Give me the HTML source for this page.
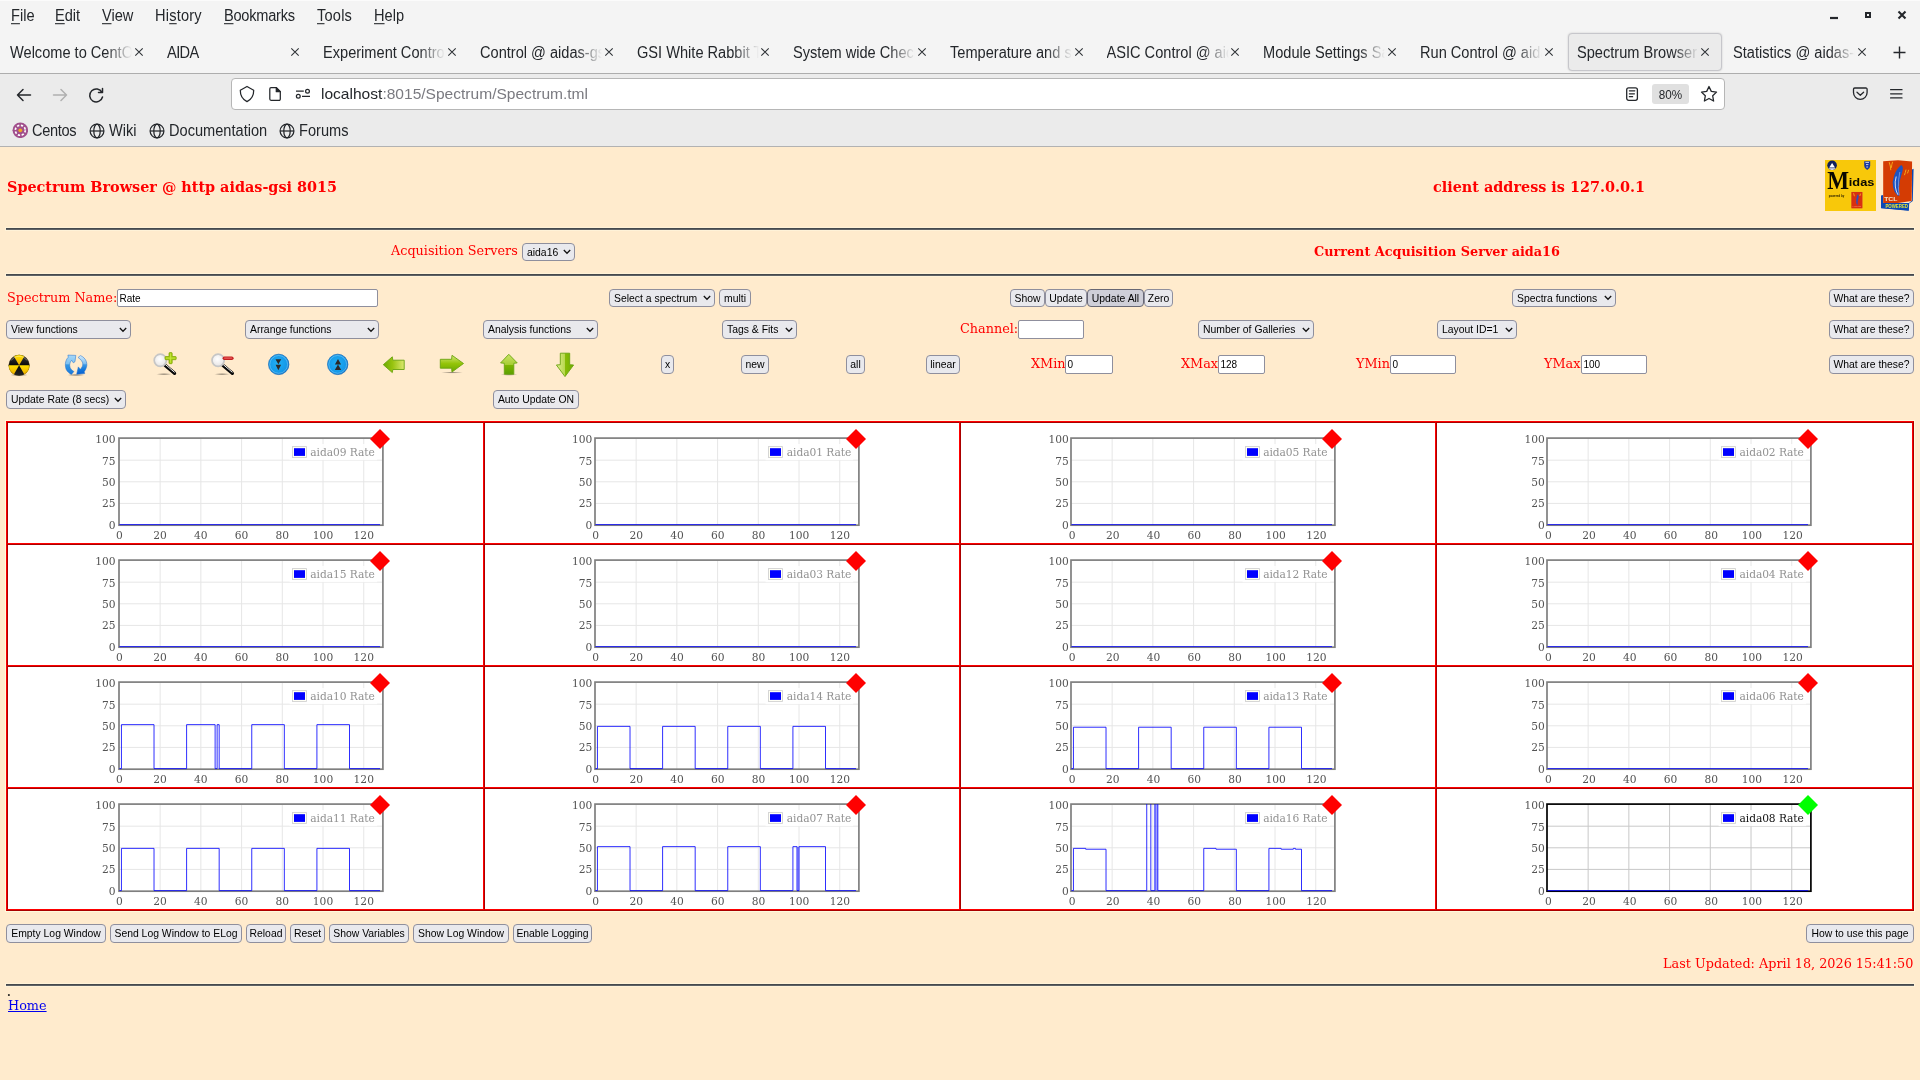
<!DOCTYPE html><html lang="en"><head><meta charset="utf-8"><title>Spectrum Browser @ aidas-gsi</title><style>
html,body{margin:0;padding:0;}
body{width:1920px;height:1080px;overflow:hidden;position:relative;background:#ffebcd;font-family:"DejaVu Serif", "Liberation Serif", serif;font-size:12.8px;color:#ff0000;}
.abs{position:absolute;white-space:nowrap;}
#chrome{position:absolute;left:0;top:0;width:1920px;height:147px;background:#ebebeb;font-family:"Liberation Sans", "DejaVu Sans", sans-serif;color:#24272b;}
#menubar{position:absolute;left:0;top:0;width:1920px;height:73px;background:#f4f4f4;border-top:1px solid #fbfbfb;box-sizing:border-box;}
.menu{position:absolute;top:7px;font-size:14.6px;line-height:18px;white-space:nowrap;transform:scaleY(1.07);transform-origin:0 13.8px;}
.menu u{text-decoration:underline;text-underline-offset:2px;}
.tab{position:absolute;top:44px;font-size:14.6px;line-height:18px;white-space:nowrap;overflow:hidden;width:124px;height:20px;transform:scaleY(1.07);transform-origin:0 13.8px;
  -webkit-mask-image:linear-gradient(to right,#000 0,#000 96px,transparent 122px);mask-image:linear-gradient(to right,#000 0,#000 96px,transparent 122px);}
.tabx{position:absolute;top:46px;width:12px;height:12px;}
.bm{position:absolute;top:122px;font-size:14.6px;line-height:18px;white-space:nowrap;transform:scaleY(1.07);transform-origin:0 13.8px;}
.btn,.sel,.inp{position:absolute;box-sizing:border-box;font-family:"Liberation Sans", "DejaVu Sans", sans-serif;font-size:10.4px;color:#000;white-space:nowrap;border:1px solid #8f8f9d;border-radius:4px;}
.btn{background:#e9e9ed;text-align:center;}
.sel{background:#e9e9ed;padding-left:4px;}
.inp{background:#fff;padding-left:1.5px;border-radius:2px;font-size:10px;}
.sel svg{position:absolute;right:3.4px;top:50%;margin-top:-2.7px;}
.cell{box-sizing:border-box;border:1px solid;border-color:#aa0000 #ff0000 #ff0000 #aa0000;background:#fff;}
.lbl{position:absolute;white-space:nowrap;font-size:12.8px;line-height:16px;color:#f00;}
.hr{position:absolute;left:6px;width:1908px;height:2px;background:linear-gradient(#46494d 0,#46494d 50%,#5e6165 50%,#5e6165 100%);box-shadow:0 0 0 1px #fff2d8;}
</style></head><body><div id="root" style="position:absolute;left:0;top:0;width:1920px;height:1080px;will-change:transform">
<div id="chrome"><div id="menubar"></div>
<div class="menu" style="left:11px"><u>F</u>ile</div>
<div class="menu" style="left:55px"><u>E</u>dit</div>
<div class="menu" style="left:102px"><u>V</u>iew</div>
<div class="menu" style="left:155px;letter-spacing:0.2px">Hi<u>s</u>tory</div>
<div class="menu" style="left:224px;letter-spacing:-0.25px"><u>B</u>ookmarks</div>
<div class="menu" style="left:317px;letter-spacing:0.2px"><u>T</u>ools</div>
<div class="menu" style="left:374px"><u>H</u>elp</div>
<svg class="abs" style="left:1820px;top:4px" width="100" height="24" viewBox="0 0 100 24"><path d="M10 14h8" stroke="#24272b" stroke-width="2.200" fill="none"/><rect x="46" y="9" width="4" height="4" fill="none" stroke="#24272b" stroke-width="2"/><path d="M78.500 7.500l7 7M85.500 7.500l-7 7" stroke="#24272b" stroke-width="2.100" fill="none"/></svg>
<div class="abs" style="left:1568px;top:33px;width:154px;height:38px;box-sizing:border-box;background:#ebebeb;border:1px solid #c6c6cb;border-radius:4px;box-shadow:0 0 2px rgba(0,0,0,.18)"></div>
<div class="tab" style="left:10px">Welcome to CentOS</div>
<svg class="tabx" style="left:133.0px" viewBox="0 0 12 12"><path d="M2.300 2.300l7.400 7.400M9.700 2.300l-7.400 7.400" stroke="#2e3236" stroke-width="1.050" fill="none"/></svg>
<div class="tab" style="left:167px;letter-spacing:-.6px">AIDA</div>
<svg class="tabx" style="left:289.0px" viewBox="0 0 12 12"><path d="M2.300 2.300l7.400 7.400M9.700 2.300l-7.400 7.400" stroke="#2e3236" stroke-width="1.050" fill="none"/></svg>
<div class="tab" style="left:323px">Experiment Control</div>
<svg class="tabx" style="left:446.0px" viewBox="0 0 12 12"><path d="M2.300 2.300l7.400 7.400M9.700 2.300l-7.400 7.400" stroke="#2e3236" stroke-width="1.050" fill="none"/></svg>
<div class="tab" style="left:480px">Control @ aidas-gsi</div>
<svg class="tabx" style="left:603.0px" viewBox="0 0 12 12"><path d="M2.300 2.300l7.400 7.400M9.700 2.300l-7.400 7.400" stroke="#2e3236" stroke-width="1.050" fill="none"/></svg>
<div class="tab" style="left:637px">GSI White Rabbit Ti</div>
<svg class="tabx" style="left:759.0px" viewBox="0 0 12 12"><path d="M2.300 2.300l7.400 7.400M9.700 2.300l-7.400 7.400" stroke="#2e3236" stroke-width="1.050" fill="none"/></svg>
<div class="tab" style="left:793px">System wide Check</div>
<svg class="tabx" style="left:916.0px" viewBox="0 0 12 12"><path d="M2.300 2.300l7.400 7.400M9.700 2.300l-7.400 7.400" stroke="#2e3236" stroke-width="1.050" fill="none"/></svg>
<div class="tab" style="left:950px">Temperature and st</div>
<svg class="tabx" style="left:1072.5px" viewBox="0 0 12 12"><path d="M2.300 2.300l7.400 7.400M9.700 2.300l-7.400 7.400" stroke="#2e3236" stroke-width="1.050" fill="none"/></svg>
<div class="tab" style="left:1106.5px">ASIC Control @ aid</div>
<svg class="tabx" style="left:1229.0px" viewBox="0 0 12 12"><path d="M2.300 2.300l7.400 7.400M9.700 2.300l-7.400 7.400" stroke="#2e3236" stroke-width="1.050" fill="none"/></svg>
<div class="tab" style="left:1263px">Module Settings Sa</div>
<svg class="tabx" style="left:1386.0px" viewBox="0 0 12 12"><path d="M2.300 2.300l7.400 7.400M9.700 2.300l-7.400 7.400" stroke="#2e3236" stroke-width="1.050" fill="none"/></svg>
<div class="tab" style="left:1420px">Run Control @ aida</div>
<svg class="tabx" style="left:1542.5px" viewBox="0 0 12 12"><path d="M2.300 2.300l7.400 7.400M9.700 2.300l-7.400 7.400" stroke="#2e3236" stroke-width="1.050" fill="none"/></svg>
<div class="tab" style="left:1577px">Spectrum Browser</div>
<svg class="tabx" style="left:1699.0px" viewBox="0 0 12 12"><path d="M2.300 2.300l7.400 7.400M9.700 2.300l-7.400 7.400" stroke="#2e3236" stroke-width="1.050" fill="none"/></svg>
<div class="tab" style="left:1733px">Statistics @ aidas-gsi</div>
<svg class="tabx" style="left:1856.0px" viewBox="0 0 12 12"><path d="M2.300 2.300l7.400 7.400M9.700 2.300l-7.400 7.400" stroke="#2e3236" stroke-width="1.050" fill="none"/></svg>
<svg class="abs" style="left:1891px;top:44px" width="17" height="17" viewBox="0 0 17 17"><path d="M8.5 2.500v12M2.500 8.500h12" stroke="#24272b" stroke-width="1.400" fill="none"/></svg>
<div class="abs" style="left:0;top:73px;width:1920px;height:1px;background:#adadad"></div>
<svg class="abs" style="left:14px;top:84.5px" width="100" height="20" viewBox="0 0 100 20" fill="none" stroke-width="1.5" stroke-linecap="round" stroke-linejoin="round"><path d="M16.5 10h-13M9 4.5L3.5 10 9 15.5" stroke="#24272b"/><path d="M39.5 10h13M47 4.5l5.500 5.500-5.500 5.500" stroke="#b0b0b0"/><path d="M88 7.500A6.500 6.500 0 1 0 88.500 12M88.500 3.500v4h-4" stroke="#24272b"/></svg>
<div class="abs" style="left:231px;top:78px;width:1494px;height:32px;box-sizing:border-box;background:#fff;border:1px solid #b6b6b6;border-radius:4px"></div>
<svg class="abs" style="left:238px;top:84px" width="80" height="20" viewBox="0 0 80 20" fill="none" stroke="#24272b" stroke-width="1.250" stroke-linejoin="round"><path d="M9 2.500L15.700 6.200C15.800 11.400 13.600 15.200 9 17.600 4.400 15.200 2.200 11.400 2.300 6.200z"/><path d="M33 3.700h5.300l4 4v7.400a1.200 1.200 0 0 1-1.200 1.200h-8.100a1.200 1.200 0 0 1-1.200-1.200v-10.200a1.200 1.200 0 0 1 1.200-1.200z"/><path d="M38.300 3.700v4h4z" fill="#24272b"/><path d="M58 7.200h7.800M64 12.300h8"/><circle cx="69.500" cy="7.200" r="1.900"/><circle cx="60.300" cy="12.300" r="1.900"/></svg>
<div class="abs" style="left:321px;top:85px;font-size:15.55px;line-height:18px;color:#24272b">localhost<span style="color:#7a7a80">:8015/Spectrum/Spectrum.tml</span></div>
<svg class="abs" style="left:1623px;top:85px" width="18" height="18" viewBox="0 0 18 18" fill="none" stroke="#24272b" stroke-width="1.300" stroke-linejoin="round" stroke-linecap="round"><rect x="3.700" y="2.800" width="10.700" height="12.500" rx="2"/><path d="M6.400 5.800h5.400M6.400 8.800h5M6.400 11.700h3.200"/></svg>
<div class="abs" style="left:1652px;top:84px;width:37px;height:20px;background:#e0e0e0;border-radius:3px;font-size:11.7px;line-height:21.5px;text-align:center;color:#24272b"><span style="display:inline-block;transform:scaleY(1.06)">80%</span></div>
<svg class="abs" style="left:1699px;top:84px" width="20" height="20" viewBox="0 0 20 20" fill="none" stroke="#24272b" stroke-width="1.300" stroke-linejoin="round"><path d="M10 2.500l2.300 4.900 5.200.7-3.800 3.700.9 5.200-4.600-2.500-4.600 2.500.9-5.200L2.500 8.100l5.200-.7z"/></svg>
<svg class="abs" style="left:1850px;top:84px" width="60" height="20" viewBox="0 0 60 20" fill="none" stroke="#24272b" stroke-width="1.300" stroke-linecap="round" stroke-linejoin="round"><path d="M4.700 4h11.200a1.200 1.200 0 0 1 1.200 1.200v3.400a6.800 6.800 0 0 1-13.600 0v-3.400a1.200 1.200 0 0 1 1.200-1.200z"/><path d="M7 8.300l3.300 2.900 3.300-2.900"/><path d="M40.600 5.700h11.400M40.600 9.800h11.400M40.600 13.900h11.400"/></svg>
<svg class="abs" style="left:11.6px;top:121.6px" width="16.6" height="16.6" viewBox="0 0 16 16"><circle cx="8" cy="8" r="7.500" fill="#a14f8c"/><circle cx="8" cy="8" r="4.800" fill="none" stroke="#fff" stroke-width="1.600" stroke-dasharray="2.200 1.570"/><circle cx="8" cy="8" r="1.800" fill="#efa724"/></svg>
<div class="bm" style="left:32px;letter-spacing:-.35px">Centos</div>
<svg class="abs" style="left:89px;top:122.5px" width="16" height="16" viewBox="0 0 16 16" fill="none" stroke="#24272b" stroke-width="1.250"><circle cx="8" cy="8" r="6.900"/><ellipse cx="8" cy="8" rx="3.200" ry="6.900"/><path d="M1.100 8h13.800"/></svg>
<div class="bm" style="left:109px">Wiki</div>
<svg class="abs" style="left:149px;top:122.5px" width="16" height="16" viewBox="0 0 16 16" fill="none" stroke="#24272b" stroke-width="1.250"><circle cx="8" cy="8" r="6.900"/><ellipse cx="8" cy="8" rx="3.200" ry="6.900"/><path d="M1.100 8h13.800"/></svg>
<div class="bm" style="left:169px">Documentation</div>
<svg class="abs" style="left:279px;top:122.5px" width="16" height="16" viewBox="0 0 16 16" fill="none" stroke="#24272b" stroke-width="1.250"><circle cx="8" cy="8" r="6.900"/><ellipse cx="8" cy="8" rx="3.200" ry="6.900"/><path d="M1.100 8h13.800"/></svg>
<div class="bm" style="left:299px">Forums</div>
<div class="abs" style="left:0;top:146px;width:1920px;height:1px;background:#b2b2b2"></div>
</div>
<div class="abs" style="left:7px;top:178px;font-size:14.4px;font-weight:bold;line-height:18px">Spectrum Browser @ http aidas-gsi 8015</div>
<div class="abs" style="left:1433px;top:178px;font-size:14.4px;font-weight:bold;line-height:18px">client address is 127.0.0.1</div>
<div class="hr" style="top:228px"></div>
<div class="lbl" style="left:391px;top:243px">Acquisition Servers</div>
<div class="lbl" style="left:1314px;top:244px;font-weight:bold">Current Acquisition Server aida16</div>
<div class="hr" style="top:274px"></div>
<div class="sel" style="left:522px;top:243px;width:53px;height:18px;line-height:18px">aida16<svg width="8" height="6" viewBox="0 0 8 6"><path d="M.800 1l3.200 3.300 3.200-3.300" fill="none" stroke="#111" stroke-width="1.250"/></svg></div>
<div class="lbl" style="left:7px;top:290px">Spectrum Name:</div>
<div class="inp" style="left:117px;top:289px;width:261px;height:18px;line-height:18px">Rate</div>
<div class="sel" style="left:609px;top:289px;width:106px;height:18px;line-height:18px">Select a spectrum<svg width="8" height="6" viewBox="0 0 8 6"><path d="M.800 1l3.200 3.300 3.200-3.300" fill="none" stroke="#111" stroke-width="1.250"/></svg></div>
<div class="btn" style="left:719px;top:289px;width:32px;height:18px;line-height:18px;">multi</div>
<div class="btn" style="left:1010px;top:289px;width:35px;height:18px;line-height:18px;">Show</div>
<div class="btn" style="left:1045px;top:289px;width:42px;height:18px;line-height:18px;">Update</div>
<div class="btn" style="left:1087px;top:289px;width:57px;height:18px;line-height:18px;background:#cfcfd8;border-color:#676774;">Update All</div>
<div class="btn" style="left:1144px;top:289px;width:29px;height:18px;line-height:18px;">Zero</div>
<div class="sel" style="left:1512px;top:289px;width:104px;height:18px;line-height:18px">Spectra functions<svg width="8" height="6" viewBox="0 0 8 6"><path d="M.800 1l3.200 3.300 3.200-3.300" fill="none" stroke="#111" stroke-width="1.250"/></svg></div>
<div class="btn" style="left:1829px;top:289px;width:85px;height:18px;line-height:18px;">What are these?</div>
<div class="sel" style="left:6px;top:320px;width:125px;height:19px;line-height:17px">View functions<svg width="8" height="6" viewBox="0 0 8 6"><path d="M.800 1l3.200 3.300 3.200-3.300" fill="none" stroke="#111" stroke-width="1.250"/></svg></div>
<div class="sel" style="left:245px;top:320px;width:134px;height:19px;line-height:17px">Arrange functions<svg width="8" height="6" viewBox="0 0 8 6"><path d="M.800 1l3.200 3.300 3.200-3.300" fill="none" stroke="#111" stroke-width="1.250"/></svg></div>
<div class="sel" style="left:483px;top:320px;width:115px;height:19px;line-height:17px">Analysis functions<svg width="8" height="6" viewBox="0 0 8 6"><path d="M.800 1l3.200 3.300 3.200-3.300" fill="none" stroke="#111" stroke-width="1.250"/></svg></div>
<div class="sel" style="left:722px;top:320px;width:75px;height:19px;line-height:17px">Tags &amp; Fits<svg width="8" height="6" viewBox="0 0 8 6"><path d="M.800 1l3.200 3.300 3.200-3.300" fill="none" stroke="#111" stroke-width="1.250"/></svg></div>
<div class="lbl" style="left:960px;top:321px">Channel:</div>
<div class="inp" style="left:1018px;top:320px;width:66px;height:19px;line-height:17px"></div>
<div class="sel" style="left:1198px;top:320px;width:116px;height:19px;line-height:17px">Number of Galleries<svg width="8" height="6" viewBox="0 0 8 6"><path d="M.800 1l3.200 3.300 3.200-3.300" fill="none" stroke="#111" stroke-width="1.250"/></svg></div>
<div class="sel" style="left:1437px;top:320px;width:80px;height:19px;line-height:17px">Layout ID=1<svg width="8" height="6" viewBox="0 0 8 6"><path d="M.800 1l3.200 3.300 3.200-3.300" fill="none" stroke="#111" stroke-width="1.250"/></svg></div>
<div class="btn" style="left:1829px;top:320px;width:85px;height:19px;line-height:17px;">What are these?</div>
<div class="btn" style="left:661px;top:355px;width:13px;height:19px;line-height:17px;">x</div>
<div class="btn" style="left:741px;top:355px;width:28px;height:19px;line-height:17px;">new</div>
<div class="btn" style="left:846px;top:355px;width:19px;height:19px;line-height:17px;">all</div>
<div class="btn" style="left:926px;top:355px;width:34px;height:19px;line-height:17px;">linear</div>
<div class="lbl" style="left:1031px;top:356px">XMin</div>
<div class="inp" style="left:1065px;top:355px;width:48px;height:19px;line-height:17px">0</div>
<div class="lbl" style="left:1181px;top:356px">XMax</div>
<div class="inp" style="left:1218px;top:355px;width:47px;height:19px;line-height:17px">128</div>
<div class="lbl" style="left:1356px;top:356px">YMin</div>
<div class="inp" style="left:1390px;top:355px;width:66px;height:19px;line-height:17px">0</div>
<div class="lbl" style="left:1544px;top:356px">YMax</div>
<div class="inp" style="left:1581px;top:355px;width:66px;height:19px;line-height:17px">100</div>
<div class="btn" style="left:1829px;top:355px;width:85px;height:19px;line-height:17px;">What are these?</div>
<div class="sel" style="left:6px;top:390px;width:120px;height:19px;line-height:17px">Update Rate (8 secs)<svg width="8" height="6" viewBox="0 0 8 6"><path d="M.800 1l3.200 3.300 3.200-3.300" fill="none" stroke="#111" stroke-width="1.250"/></svg></div>
<div class="btn" style="left:493px;top:390px;width:86px;height:19px;line-height:17px;">Auto Update ON</div>
<svg class="abs" style="left:0px;top:345px" width="600" height="40" viewBox="0 345 600 40">
<defs>
<radialGradient id="gsh"><stop offset="0" stop-color="#000" stop-opacity=".45"/><stop offset="1" stop-color="#000" stop-opacity="0"/></radialGradient>
<linearGradient id="gY" x1="0" y1="0" x2="0" y2="1"><stop offset="0" stop-color="#ffe000"/><stop offset=".5" stop-color="#f8c800"/><stop offset="1" stop-color="#f0b000"/></linearGradient>
<linearGradient id="gK" x1="0" y1="0" x2="0" y2="1"><stop offset="0" stop-color="#3a3a3a"/><stop offset=".5" stop-color="#0a0a0a"/><stop offset="1" stop-color="#222"/></linearGradient>
<linearGradient id="gB" x1="0" y1="0" x2="0" y2="1"><stop offset="0" stop-color="#a8d8f8"/><stop offset=".46" stop-color="#7cc0f0"/><stop offset=".5" stop-color="#3498e4"/><stop offset="1" stop-color="#1c78d8"/></linearGradient><linearGradient id="gB2" x1="0" y1="0" x2="0" y2="1"><stop offset="0" stop-color="#d4ecfc"/><stop offset=".42" stop-color="#84c0f0"/><stop offset=".5" stop-color="#3c98e4"/><stop offset=".75" stop-color="#1478dc"/><stop offset="1" stop-color="#0860d0"/></linearGradient>
<radialGradient id="gBall" cx=".45" cy=".45" r=".6"><stop offset="0" stop-color="#22b0f4"/><stop offset=".75" stop-color="#1498e8"/><stop offset="1" stop-color="#0a6cc0"/></radialGradient>
<radialGradient id="gLens" cx=".45" cy=".4" r=".6"><stop offset="0" stop-color="#ffffff"/><stop offset="1" stop-color="#e6e4e4"/></radialGradient>
<linearGradient id="gGL" x1="0" y1="0" x2="1" y2="0"><stop offset="0" stop-color="#6aa800"/><stop offset=".45" stop-color="#98c410"/><stop offset="1" stop-color="#dce870"/></linearGradient>
<linearGradient id="gGR" x1="0" y1="0" x2="0" y2="1"><stop offset="0" stop-color="#d4e878"/><stop offset=".5" stop-color="#94c408"/><stop offset="1" stop-color="#6aa800"/></linearGradient>
<linearGradient id="gGU" x1="0" y1="0" x2="0" y2="1"><stop offset="0" stop-color="#cce468"/><stop offset=".55" stop-color="#a4cc30"/><stop offset=".56" stop-color="#7cb400"/><stop offset="1" stop-color="#5ca000"/></linearGradient>
<linearGradient id="gGD" x1="0" y1="0" x2="1" y2="0"><stop offset="0" stop-color="#e0ee90"/><stop offset=".48" stop-color="#b8d850"/><stop offset=".5" stop-color="#88bc08"/><stop offset="1" stop-color="#70ac00"/></linearGradient>
</defs>
<!-- 1 radiation ball -->
<ellipse cx="19" cy="375" rx="9" ry="1.600" fill="url(#gsh)"/>
<circle cx="19.100" cy="365.300" r="10.500" fill="url(#gK)"/>
<g fill="url(#gY)">
<path d="M19.100 365.300L13.850 356.200A10.500 10.500 0 0 1 24.350 356.200z"/>
<path d="M19.100 365.300L29.600 365.300A10.500 10.500 0 0 1 24.350 374.400z"/>
<path d="M19.100 365.300L13.850 374.400A10.500 10.500 0 0 1 8.600 365.300z"/>
</g>
<circle cx="19.100" cy="365.300" r="10.200" fill="none" stroke="#5a4a00" stroke-opacity=".35" stroke-width=".6"/>
<path d="M11.200 360.500A9.500 9.500 0 0 1 27 360.500" fill="none" stroke="#fff" stroke-opacity=".35" stroke-width="1"/>
<!-- 2 refresh -->
<ellipse cx="76" cy="375" rx="9" ry="1.300" fill="url(#gsh)"/>
<g stroke="#1c6ccc" stroke-width=".5" stroke-linejoin="round">
<path fill="url(#gB)" d="M67.900 355.100L75.800 355.400 75 361.700 73.300 362.800 71.700 360.300C70.300 361.800 69.600 363.600 69.700 365.600 69.800 367.200 70.300 368.400 71.100 369.200 71.900 370.200 72.900 371 73.900 371.500L71.400 374.400C70.200 373.900 69.200 373.200 68.300 372.200 66.800 370.900 66 369.400 65.700 367.800 65.400 366.300 65.300 364.800 65.400 363.300 65.600 361.700 66.100 360.200 66.900 358.900 67.300 358.300 67.800 357.700 68.300 357.200z"/>
<path fill="url(#gB2)" d="M78.100 357.500L80.400 355.600C81.700 356.100 82.900 356.800 83.900 357.800 85.100 358.900 85.900 360.200 86.400 361.700 86.800 363 86.900 364.300 86.800 365.600 86.600 367 86.200 368.300 85.600 369.400 85.200 370.200 84.700 371 84.200 371.700L84.700 373.600 76.700 374.200 78.300 366.900 80.300 369.200C81.200 368.500 81.800 367.700 82.200 366.700 82.600 365.800 82.800 364.900 82.800 363.900 82.700 362.700 82.200 361.600 81.400 360.600 80.500 359.300 79.400 358.300 78.100 357.500z"/>
</g>
<!-- 3 zoom in -->
<ellipse cx="164" cy="374.200" rx="8" ry="1.200" fill="url(#gsh)"/>
<path d="M165 365.200L174.500 373.300" stroke="#0a0a0a" stroke-width="3.400" stroke-linecap="round"/>
<path d="M165.600 364.700L174.300 372.100" stroke="#f4f4f4" stroke-width="1" stroke-linecap="round"/>
<circle cx="160.300" cy="360.300" r="6.100" fill="url(#gLens)" stroke="#c6c6c6" stroke-width="1.700"/>
<path d="M169 353.300a.7.700 0 0 1 .7-.7h1.800a.7.700 0 0 1 .7.700v3.200h3.300a.7.700 0 0 1 .7.700v1.800a.7.700 0 0 1-.7.700h-3.300v3.300a.7.700 0 0 1-.7.700h-1.800a.7.700 0 0 1-.7-.7v-3.300h-3.300a.7.700 0 0 1-.7-.7v-1.800a.7.700 0 0 1 .7-.7h3.300z" fill="#a4cc10" stroke="#7ca000" stroke-width=".7"/>
<path d="M170.600 353.800v8.600M166.200 358.100h8.800" stroke="#c8e840" stroke-width=".9" stroke-linecap="round"/>
<!-- 4 zoom out -->
<ellipse cx="222" cy="374.200" rx="8" ry="1.200" fill="url(#gsh)"/>
<path d="M222.800 365.200L232.300 373.300" stroke="#0a0a0a" stroke-width="3.400" stroke-linecap="round"/>
<path d="M223.400 364.700L232.100 372.100" stroke="#f4f4f4" stroke-width="1" stroke-linecap="round"/>
<circle cx="218.100" cy="360.300" r="6.100" fill="url(#gLens)" stroke="#c6c6c6" stroke-width="1.700"/>
<path d="M224.300 358.300h7.600" stroke="#c42020" stroke-width="3.400" stroke-linecap="round"/>
<path d="M224.600 358.100h7" stroke="#ec5c5c" stroke-width="1.400" stroke-linecap="round"/>
<!-- 5 / 6 blue balls -->
<circle cx="278.700" cy="364.400" r="10.200" fill="url(#gBall)" stroke="#0c64b8" stroke-width=".7"/>
<circle cx="278.700" cy="364.400" r="8.900" fill="none" stroke="#a4dcfc" stroke-opacity=".55" stroke-width=".8"/>
<path d="M275.500 359.200h5.700l-2.850 5zM275.600 364.800h5.500l-2.750 5.400z" fill="#2c2826"/>
<circle cx="337.700" cy="364.400" r="10.200" fill="url(#gBall)" stroke="#0c64b8" stroke-width=".7"/>
<circle cx="337.700" cy="364.400" r="8.900" fill="none" stroke="#a4dcfc" stroke-opacity=".55" stroke-width=".8"/>
<path d="M338 358.900l3.100 5.600h-6.200zM338 364.500l3.200 5.400h-6.400z" fill="#2c2826"/>
<!-- 7 left arrow -->
<path d="M383.300 364.700L392.300 356.800 392.800 360.200 404.200 360.200 404.200 369.500 392.800 369.500 392.300 372.600z" fill="url(#gGL)" stroke="#6aa410" stroke-width=".9" stroke-linejoin="round"/>
<!-- 8 right arrow -->
<ellipse cx="452" cy="372.600" rx="11" ry="1" fill="url(#gsh)"/>
<path d="M463.500 363.500L452 355.300 451.600 359.300 440.300 359.300 440.300 368.200 451.600 368.200 452 372z" fill="url(#gGR)" stroke="#6aa410" stroke-width=".9" stroke-linejoin="round"/>
<!-- 9 up arrow -->
<ellipse cx="509" cy="374.600" rx="8.500" ry="1.200" fill="url(#gsh)"/>
<path d="M508.800 354.300L517.200 362.900 513.800 363.300 513.800 374.200 504.300 374.200 504.300 363.300 500.600 362.900z" fill="url(#gGU)" stroke="#6aa410" stroke-width=".9" stroke-linejoin="round"/>
<!-- 10 down arrow -->
<path d="M565 376.600L556.400 365 560.300 364.700 560.300 353.200 569.700 353.200 569.700 364.700 573.600 365z" fill="url(#gGD)" stroke="#6aa410" stroke-width=".9" stroke-linejoin="round"/>
</svg>

<svg class="abs" style="left:1820px;top:156px" width="100" height="60" viewBox="1820 156 100 60">
<!-- Midas -->
<rect x="1825" y="160" width="51" height="51" fill="#f8c80a"/>
<circle cx="1832.100" cy="165.300" r="4.800" fill="#10205c"/>
<path d="M1829.200 167.600l2.900-4.600 2.900 4.600z" fill="#fff"/>
<path d="M1828.400 168.200a4.800 4.800 0 0 0 7.400 0z" fill="#e8ecf8"/>
<path d="M1864.200 161.200h6v4.500q0 2.800-3 4.200-3-1.400-3-4.200z" fill="#1838a0"/>
<path d="M1865.400 162.400h3.600M1866 164.600h2.400M1866.300 167h1.800" stroke="#e0e4f4" stroke-width=".9" fill="none"/>
<text x="1827.200" y="188.600" font-family='"Liberation Serif", "DejaVu Serif", serif' font-weight="bold" font-size="25.200" textLength="21.800" lengthAdjust="spacingAndGlyphs" fill="#0a0800">M</text>
<text x="1848.800" y="186.200" font-family='"Liberation Sans", "DejaVu Sans", sans-serif' font-weight="bold" font-size="11.200" textLength="25.600" lengthAdjust="spacingAndGlyphs" fill="#0a0800">idas</text>
<text x="1828.800" y="196.800" font-family='"Liberation Sans", "DejaVu Sans", sans-serif' font-weight="bold" font-size="3.300" textLength="15.400" lengthAdjust="spacingAndGlyphs" fill="#201800">powered by</text>
<rect x="1850.800" y="191.400" width="12.200" height="17.500" fill="#f4d820"/>
<rect x="1851.300" y="191.900" width="11.200" height="16.500" fill="#d83010"/>
<path d="M1857.600 194.200q1.800 1.200.6 4.800-1 3-.5 6.600-2.200-2.800-1.400-6.400.5-3.400 1.300-5z" fill="#2850c0"/>
<path d="M1853.600 193.200l.8 3M1860.600 193.600l-.8 2.400" stroke="#f8d028" stroke-width=".7" fill="none"/>
<text x="1852.600" y="206.900" font-family='"Liberation Sans", "DejaVu Sans", sans-serif' font-weight="bold" font-size="2.400" textLength="8.600" lengthAdjust="spacingAndGlyphs" fill="#f08060">POWERED</text>
<!-- TCL powered -->
<path d="M1881 195.500l2.200-.4V203h25.800l3-2.600v-31l1.600-.6-.8 32.200-3.600 2.400-.4 7.300-27.800-2.400z" fill="#0a48b4"/>
<path d="M1883.200 161.200l14.800-.9 14.100 1.200-.4 39.600-14 2-14.500-.2z" fill="#d43c04"/>
<path d="M1881.200 203l27.800.2-.4 7.400-27.600-2.600z" fill="#0a48b4"/>
<path d="M1901.200 165q2.600 1.400 1.200 6.400-1.400 4.600-2.600 9.600-1.200 6.400-.6 14.400-1.500 1-2.300-.6-2.600-2.600-3.800-7.600-1.200-5.600 1-11.400 2.400-7 7.100-10.800z" fill="#1c54c4"/>
<path d="M1896.200 176.500q-1.600 5.500-.8 10.500.6 4.200 2.500 7.800" stroke="#e8e8f4" stroke-width=".9" fill="none"/>
<path d="M1899.800 172q-1.600 8-1.400 14.500.2 5 .8 8.800" stroke="#88a8e8" stroke-width=".7" fill="none"/>
<path d="M1889.200 162.200q1.400 3.600 1.600 8M1892.600 161.800q-1 2.800-1.200 6M1906 169.600q-.6 3-1.600 5.600M1908.600 169.800q-.4 2-1.200 3.600" stroke="#f8b018" stroke-width=".9" fill="none"/>
<text x="1884.200" y="201" font-family='"Liberation Sans", "DejaVu Sans", sans-serif' font-weight="bold" font-size="5.600" textLength="13.200" lengthAdjust="spacingAndGlyphs" fill="#f8e8d0">TCL</text>
<text x="1885.400" y="208.400" font-family='"Liberation Sans", "DejaVu Sans", sans-serif' font-weight="bold" font-size="5.400" textLength="22.600" lengthAdjust="spacingAndGlyphs" fill="#e8e430">POWERED</text>
</svg>

<div class="abs" style="left:5px;top:420px;width:1910px;height:492px;background:#fffadc"></div>
<div class="abs" style="left:6px;top:421px;width:1908px;height:490px;background:#fff"></div>
<div id="gallery" class="abs" style="left:6px;top:421px;width:1908px;height:490px;box-sizing:border-box;border:1px solid;border-color:#ff0000 #aa0000 #aa0000 #ff0000"></div>
<div class="abs cell" style="left:7px;top:422px;width:477px;height:122px"><svg class="abs" style="left:62px;top:1px" width="340" height="118" viewBox="0 0 340 118" font-family='DejaVu Serif, Liberation Serif, serif' font-size="10.67"><path d="M90.13 14.10V101.20M130.85 14.10V101.20M171.58 14.10V101.20M212.30 14.10V101.20M253.03 14.10V101.20M293.76 14.10V101.20M49.00 79.40H312.90M49.00 57.80H312.90M49.00 36.20H312.90" stroke="#e6e6e6" stroke-width="1" fill="none"/><clipPath id="c00"><rect x="49.00" y="14.10" width="263.90" height="88.10"/></clipPath><rect x="49.00" y="14.10" width="263.90" height="87.10" fill="none" stroke="#7f7f7f" stroke-width="1.7"/><path d="M49.40 100.60L310.05 100.60" clip-path="url(#c00)" stroke="#0000ff" stroke-width="1" fill="none" stroke-opacity="0.82"/><text x="49.40" y="115.10" text-anchor="middle" fill="#545454">0</text><text x="90.13" y="115.10" text-anchor="middle" fill="#545454">20</text><text x="130.85" y="115.10" text-anchor="middle" fill="#545454">40</text><text x="171.58" y="115.10" text-anchor="middle" fill="#545454">60</text><text x="212.30" y="115.10" text-anchor="middle" fill="#545454">80</text><text x="253.03" y="115.10" text-anchor="middle" fill="#545454">100</text><text x="293.76" y="115.10" text-anchor="middle" fill="#545454">120</text><text x="45.50" y="105.00" text-anchor="end" fill="#545454">0</text><text x="45.50" y="83.40" text-anchor="end" fill="#545454">25</text><text x="45.50" y="62.00" text-anchor="end" fill="#545454">50</text><text x="45.50" y="41.00" text-anchor="end" fill="#545454">75</text><text x="45.50" y="19.00" text-anchor="end" fill="#545454">100</text><rect x="219.60" y="20.00" width="87.6" height="16.2" fill="#fff" fill-opacity="0.85"/><rect x="222.40" y="22.60" width="14" height="10.8" fill="#fffff4" stroke="#ccc" stroke-width="0.8"/><rect x="224.00" y="24.20" width="11" height="7.7" fill="#0000ff"/><text x="240.30" y="31.70" fill="#929292" textLength="64.4">aida09 Rate</text><path d="M310 5L320 15L310 25L300 15z" fill="#ff0000"/></svg></div>
<div class="abs cell" style="left:484px;top:422px;width:476px;height:122px"><svg class="abs" style="left:61px;top:1px" width="340" height="118" viewBox="0 0 340 118" font-family='DejaVu Serif, Liberation Serif, serif' font-size="10.67"><path d="M90.13 14.10V101.20M130.85 14.10V101.20M171.58 14.10V101.20M212.30 14.10V101.20M253.03 14.10V101.20M293.76 14.10V101.20M49.00 79.40H312.90M49.00 57.80H312.90M49.00 36.20H312.90" stroke="#e6e6e6" stroke-width="1" fill="none"/><clipPath id="c01"><rect x="49.00" y="14.10" width="263.90" height="88.10"/></clipPath><rect x="49.00" y="14.10" width="263.90" height="87.10" fill="none" stroke="#7f7f7f" stroke-width="1.7"/><path d="M49.40 100.60L310.05 100.60" clip-path="url(#c01)" stroke="#0000ff" stroke-width="1" fill="none" stroke-opacity="0.82"/><text x="49.60" y="115.10" text-anchor="middle" fill="#545454">0</text><text x="90.33" y="115.10" text-anchor="middle" fill="#545454">20</text><text x="131.05" y="115.10" text-anchor="middle" fill="#545454">40</text><text x="171.78" y="115.10" text-anchor="middle" fill="#545454">60</text><text x="212.50" y="115.10" text-anchor="middle" fill="#545454">80</text><text x="253.23" y="115.10" text-anchor="middle" fill="#545454">100</text><text x="293.96" y="115.10" text-anchor="middle" fill="#545454">120</text><text x="46.30" y="105.00" text-anchor="end" fill="#545454">0</text><text x="46.30" y="83.40" text-anchor="end" fill="#545454">25</text><text x="46.30" y="62.00" text-anchor="end" fill="#545454">50</text><text x="46.30" y="41.00" text-anchor="end" fill="#545454">75</text><text x="46.30" y="19.00" text-anchor="end" fill="#545454">100</text><rect x="219.60" y="20.00" width="87.6" height="16.2" fill="#fff" fill-opacity="0.85"/><rect x="222.40" y="22.60" width="14" height="10.8" fill="#fffff4" stroke="#ccc" stroke-width="0.8"/><rect x="224.00" y="24.20" width="11" height="7.7" fill="#0000ff"/><text x="240.80" y="31.70" fill="#929292" textLength="64.4">aida01 Rate</text><path d="M310 5L320 15L310 25L300 15z" fill="#ff0000"/></svg></div>
<div class="abs cell" style="left:960px;top:422px;width:476px;height:122px"><svg class="abs" style="left:61px;top:1px" width="340" height="118" viewBox="0 0 340 118" font-family='DejaVu Serif, Liberation Serif, serif' font-size="10.67"><path d="M90.13 14.10V101.20M130.85 14.10V101.20M171.58 14.10V101.20M212.30 14.10V101.20M253.03 14.10V101.20M293.76 14.10V101.20M49.00 79.40H312.90M49.00 57.80H312.90M49.00 36.20H312.90" stroke="#e6e6e6" stroke-width="1" fill="none"/><clipPath id="c02"><rect x="49.00" y="14.10" width="263.90" height="88.10"/></clipPath><rect x="49.00" y="14.10" width="263.90" height="87.10" fill="none" stroke="#7f7f7f" stroke-width="1.7"/><path d="M49.40 100.60L310.05 100.60" clip-path="url(#c02)" stroke="#0000ff" stroke-width="1" fill="none" stroke-opacity="0.82"/><text x="50.10" y="115.10" text-anchor="middle" fill="#545454">0</text><text x="90.83" y="115.10" text-anchor="middle" fill="#545454">20</text><text x="131.55" y="115.10" text-anchor="middle" fill="#545454">40</text><text x="172.28" y="115.10" text-anchor="middle" fill="#545454">60</text><text x="213.00" y="115.10" text-anchor="middle" fill="#545454">80</text><text x="253.73" y="115.10" text-anchor="middle" fill="#545454">100</text><text x="294.46" y="115.10" text-anchor="middle" fill="#545454">120</text><text x="46.80" y="105.00" text-anchor="end" fill="#545454">0</text><text x="46.80" y="83.40" text-anchor="end" fill="#545454">25</text><text x="46.80" y="62.00" text-anchor="end" fill="#545454">50</text><text x="46.80" y="41.00" text-anchor="end" fill="#545454">75</text><text x="46.80" y="19.00" text-anchor="end" fill="#545454">100</text><rect x="220.60" y="20.00" width="87.6" height="16.2" fill="#fff" fill-opacity="0.85"/><rect x="223.40" y="22.60" width="14" height="10.8" fill="#fffff4" stroke="#ccc" stroke-width="0.8"/><rect x="225.00" y="24.20" width="11" height="7.7" fill="#0000ff"/><text x="241.20" y="31.70" fill="#929292" textLength="64.4">aida05 Rate</text><path d="M310 5L320 15L310 25L300 15z" fill="#ff0000"/></svg></div>
<div class="abs cell" style="left:1436px;top:422px;width:477px;height:122px"><svg class="abs" style="left:61px;top:1px" width="340" height="118" viewBox="0 0 340 118" font-family='DejaVu Serif, Liberation Serif, serif' font-size="10.67"><path d="M90.13 14.10V101.20M130.85 14.10V101.20M171.58 14.10V101.20M212.30 14.10V101.20M253.03 14.10V101.20M293.76 14.10V101.20M49.00 79.40H312.90M49.00 57.80H312.90M49.00 36.20H312.90" stroke="#e6e6e6" stroke-width="1" fill="none"/><clipPath id="c03"><rect x="49.00" y="14.10" width="263.90" height="88.10"/></clipPath><rect x="49.00" y="14.10" width="263.90" height="87.10" fill="none" stroke="#7f7f7f" stroke-width="1.7"/><path d="M49.40 100.60L310.05 100.60" clip-path="url(#c03)" stroke="#0000ff" stroke-width="1" fill="none" stroke-opacity="0.82"/><text x="50.30" y="115.10" text-anchor="middle" fill="#545454">0</text><text x="91.03" y="115.10" text-anchor="middle" fill="#545454">20</text><text x="131.75" y="115.10" text-anchor="middle" fill="#545454">40</text><text x="172.48" y="115.10" text-anchor="middle" fill="#545454">60</text><text x="213.20" y="115.10" text-anchor="middle" fill="#545454">80</text><text x="253.93" y="115.10" text-anchor="middle" fill="#545454">100</text><text x="294.66" y="115.10" text-anchor="middle" fill="#545454">120</text><text x="46.80" y="105.00" text-anchor="end" fill="#545454">0</text><text x="46.80" y="83.40" text-anchor="end" fill="#545454">25</text><text x="46.80" y="62.00" text-anchor="end" fill="#545454">50</text><text x="46.80" y="41.00" text-anchor="end" fill="#545454">75</text><text x="46.80" y="19.00" text-anchor="end" fill="#545454">100</text><rect x="220.60" y="20.00" width="87.6" height="16.2" fill="#fff" fill-opacity="0.85"/><rect x="223.40" y="22.60" width="14" height="10.8" fill="#fffff4" stroke="#ccc" stroke-width="0.8"/><rect x="225.00" y="24.20" width="11" height="7.7" fill="#0000ff"/><text x="241.50" y="31.70" fill="#929292" textLength="64.4">aida02 Rate</text><path d="M310 5L320 15L310 25L300 15z" fill="#ff0000"/></svg></div>
<div class="abs cell" style="left:7px;top:544px;width:477px;height:122px"><svg class="abs" style="left:62px;top:1px" width="340" height="118" viewBox="0 0 340 118" font-family='DejaVu Serif, Liberation Serif, serif' font-size="10.67"><path d="M90.13 14.10V101.20M130.85 14.10V101.20M171.58 14.10V101.20M212.30 14.10V101.20M253.03 14.10V101.20M293.76 14.10V101.20M49.00 79.40H312.90M49.00 57.80H312.90M49.00 36.20H312.90" stroke="#e6e6e6" stroke-width="1" fill="none"/><clipPath id="c10"><rect x="49.00" y="14.10" width="263.90" height="88.10"/></clipPath><rect x="49.00" y="14.10" width="263.90" height="87.10" fill="none" stroke="#7f7f7f" stroke-width="1.7"/><path d="M49.40 100.60L310.05 100.60" clip-path="url(#c10)" stroke="#0000ff" stroke-width="1" fill="none" stroke-opacity="0.82"/><text x="49.40" y="115.10" text-anchor="middle" fill="#545454">0</text><text x="90.13" y="115.10" text-anchor="middle" fill="#545454">20</text><text x="130.85" y="115.10" text-anchor="middle" fill="#545454">40</text><text x="171.58" y="115.10" text-anchor="middle" fill="#545454">60</text><text x="212.30" y="115.10" text-anchor="middle" fill="#545454">80</text><text x="253.03" y="115.10" text-anchor="middle" fill="#545454">100</text><text x="293.76" y="115.10" text-anchor="middle" fill="#545454">120</text><text x="45.50" y="105.00" text-anchor="end" fill="#545454">0</text><text x="45.50" y="83.40" text-anchor="end" fill="#545454">25</text><text x="45.50" y="62.00" text-anchor="end" fill="#545454">50</text><text x="45.50" y="41.00" text-anchor="end" fill="#545454">75</text><text x="45.50" y="19.00" text-anchor="end" fill="#545454">100</text><rect x="219.60" y="20.00" width="87.6" height="16.2" fill="#fff" fill-opacity="0.85"/><rect x="222.40" y="22.60" width="14" height="10.8" fill="#fffff4" stroke="#ccc" stroke-width="0.8"/><rect x="224.00" y="24.20" width="11" height="7.7" fill="#0000ff"/><text x="240.30" y="31.70" fill="#929292" textLength="64.4">aida15 Rate</text><path d="M310 5L320 15L310 25L300 15z" fill="#ff0000"/></svg></div>
<div class="abs cell" style="left:484px;top:544px;width:476px;height:122px"><svg class="abs" style="left:61px;top:1px" width="340" height="118" viewBox="0 0 340 118" font-family='DejaVu Serif, Liberation Serif, serif' font-size="10.67"><path d="M90.13 14.10V101.20M130.85 14.10V101.20M171.58 14.10V101.20M212.30 14.10V101.20M253.03 14.10V101.20M293.76 14.10V101.20M49.00 79.40H312.90M49.00 57.80H312.90M49.00 36.20H312.90" stroke="#e6e6e6" stroke-width="1" fill="none"/><clipPath id="c11"><rect x="49.00" y="14.10" width="263.90" height="88.10"/></clipPath><rect x="49.00" y="14.10" width="263.90" height="87.10" fill="none" stroke="#7f7f7f" stroke-width="1.7"/><path d="M49.40 100.60L310.05 100.60" clip-path="url(#c11)" stroke="#0000ff" stroke-width="1" fill="none" stroke-opacity="0.82"/><text x="49.60" y="115.10" text-anchor="middle" fill="#545454">0</text><text x="90.33" y="115.10" text-anchor="middle" fill="#545454">20</text><text x="131.05" y="115.10" text-anchor="middle" fill="#545454">40</text><text x="171.78" y="115.10" text-anchor="middle" fill="#545454">60</text><text x="212.50" y="115.10" text-anchor="middle" fill="#545454">80</text><text x="253.23" y="115.10" text-anchor="middle" fill="#545454">100</text><text x="293.96" y="115.10" text-anchor="middle" fill="#545454">120</text><text x="46.30" y="105.00" text-anchor="end" fill="#545454">0</text><text x="46.30" y="83.40" text-anchor="end" fill="#545454">25</text><text x="46.30" y="62.00" text-anchor="end" fill="#545454">50</text><text x="46.30" y="41.00" text-anchor="end" fill="#545454">75</text><text x="46.30" y="19.00" text-anchor="end" fill="#545454">100</text><rect x="219.60" y="20.00" width="87.6" height="16.2" fill="#fff" fill-opacity="0.85"/><rect x="222.40" y="22.60" width="14" height="10.8" fill="#fffff4" stroke="#ccc" stroke-width="0.8"/><rect x="224.00" y="24.20" width="11" height="7.7" fill="#0000ff"/><text x="240.80" y="31.70" fill="#929292" textLength="64.4">aida03 Rate</text><path d="M310 5L320 15L310 25L300 15z" fill="#ff0000"/></svg></div>
<div class="abs cell" style="left:960px;top:544px;width:476px;height:122px"><svg class="abs" style="left:61px;top:1px" width="340" height="118" viewBox="0 0 340 118" font-family='DejaVu Serif, Liberation Serif, serif' font-size="10.67"><path d="M90.13 14.10V101.20M130.85 14.10V101.20M171.58 14.10V101.20M212.30 14.10V101.20M253.03 14.10V101.20M293.76 14.10V101.20M49.00 79.40H312.90M49.00 57.80H312.90M49.00 36.20H312.90" stroke="#e6e6e6" stroke-width="1" fill="none"/><clipPath id="c12"><rect x="49.00" y="14.10" width="263.90" height="88.10"/></clipPath><rect x="49.00" y="14.10" width="263.90" height="87.10" fill="none" stroke="#7f7f7f" stroke-width="1.7"/><path d="M49.40 100.60L310.05 100.60" clip-path="url(#c12)" stroke="#0000ff" stroke-width="1" fill="none" stroke-opacity="0.82"/><text x="50.10" y="115.10" text-anchor="middle" fill="#545454">0</text><text x="90.83" y="115.10" text-anchor="middle" fill="#545454">20</text><text x="131.55" y="115.10" text-anchor="middle" fill="#545454">40</text><text x="172.28" y="115.10" text-anchor="middle" fill="#545454">60</text><text x="213.00" y="115.10" text-anchor="middle" fill="#545454">80</text><text x="253.73" y="115.10" text-anchor="middle" fill="#545454">100</text><text x="294.46" y="115.10" text-anchor="middle" fill="#545454">120</text><text x="46.80" y="105.00" text-anchor="end" fill="#545454">0</text><text x="46.80" y="83.40" text-anchor="end" fill="#545454">25</text><text x="46.80" y="62.00" text-anchor="end" fill="#545454">50</text><text x="46.80" y="41.00" text-anchor="end" fill="#545454">75</text><text x="46.80" y="19.00" text-anchor="end" fill="#545454">100</text><rect x="220.60" y="20.00" width="87.6" height="16.2" fill="#fff" fill-opacity="0.85"/><rect x="223.40" y="22.60" width="14" height="10.8" fill="#fffff4" stroke="#ccc" stroke-width="0.8"/><rect x="225.00" y="24.20" width="11" height="7.7" fill="#0000ff"/><text x="241.20" y="31.70" fill="#929292" textLength="64.4">aida12 Rate</text><path d="M310 5L320 15L310 25L300 15z" fill="#ff0000"/></svg></div>
<div class="abs cell" style="left:1436px;top:544px;width:477px;height:122px"><svg class="abs" style="left:61px;top:1px" width="340" height="118" viewBox="0 0 340 118" font-family='DejaVu Serif, Liberation Serif, serif' font-size="10.67"><path d="M90.13 14.10V101.20M130.85 14.10V101.20M171.58 14.10V101.20M212.30 14.10V101.20M253.03 14.10V101.20M293.76 14.10V101.20M49.00 79.40H312.90M49.00 57.80H312.90M49.00 36.20H312.90" stroke="#e6e6e6" stroke-width="1" fill="none"/><clipPath id="c13"><rect x="49.00" y="14.10" width="263.90" height="88.10"/></clipPath><rect x="49.00" y="14.10" width="263.90" height="87.10" fill="none" stroke="#7f7f7f" stroke-width="1.7"/><path d="M49.40 100.60L310.05 100.60" clip-path="url(#c13)" stroke="#0000ff" stroke-width="1" fill="none" stroke-opacity="0.82"/><text x="50.30" y="115.10" text-anchor="middle" fill="#545454">0</text><text x="91.03" y="115.10" text-anchor="middle" fill="#545454">20</text><text x="131.75" y="115.10" text-anchor="middle" fill="#545454">40</text><text x="172.48" y="115.10" text-anchor="middle" fill="#545454">60</text><text x="213.20" y="115.10" text-anchor="middle" fill="#545454">80</text><text x="253.93" y="115.10" text-anchor="middle" fill="#545454">100</text><text x="294.66" y="115.10" text-anchor="middle" fill="#545454">120</text><text x="46.80" y="105.00" text-anchor="end" fill="#545454">0</text><text x="46.80" y="83.40" text-anchor="end" fill="#545454">25</text><text x="46.80" y="62.00" text-anchor="end" fill="#545454">50</text><text x="46.80" y="41.00" text-anchor="end" fill="#545454">75</text><text x="46.80" y="19.00" text-anchor="end" fill="#545454">100</text><rect x="220.60" y="20.00" width="87.6" height="16.2" fill="#fff" fill-opacity="0.85"/><rect x="223.40" y="22.60" width="14" height="10.8" fill="#fffff4" stroke="#ccc" stroke-width="0.8"/><rect x="225.00" y="24.20" width="11" height="7.7" fill="#0000ff"/><text x="241.50" y="31.70" fill="#929292" textLength="64.4">aida04 Rate</text><path d="M310 5L320 15L310 25L300 15z" fill="#ff0000"/></svg></div>
<div class="abs cell" style="left:7px;top:666px;width:477px;height:122px"><svg class="abs" style="left:62px;top:1px" width="340" height="118" viewBox="0 0 340 118" font-family='DejaVu Serif, Liberation Serif, serif' font-size="10.67"><path d="M90.13 14.10V101.20M130.85 14.10V101.20M171.58 14.10V101.20M212.30 14.10V101.20M253.03 14.10V101.20M293.76 14.10V101.20M49.00 79.40H312.90M49.00 57.80H312.90M49.00 36.20H312.90" stroke="#e6e6e6" stroke-width="1" fill="none"/><clipPath id="c20"><rect x="49.00" y="14.10" width="263.90" height="88.10"/></clipPath><rect x="49.00" y="14.10" width="263.90" height="87.10" fill="none" stroke="#7f7f7f" stroke-width="1.7"/><path d="M49.40 100.60L51.44 100.60L51.44 56.64L84.02 56.64L84.02 100.60L116.60 100.60L116.60 56.64L145.11 56.64L145.11 100.60L147.14 100.60L147.14 56.64L149.18 56.64L149.18 100.60L181.76 100.60L181.76 56.64L214.34 56.64L214.34 100.60L246.92 100.60L246.92 56.64L279.50 56.64L279.50 100.60L310.05 100.60" clip-path="url(#c20)" stroke="#0000ff" stroke-width="1" fill="none" stroke-opacity="0.82"/><text x="49.40" y="115.10" text-anchor="middle" fill="#545454">0</text><text x="90.13" y="115.10" text-anchor="middle" fill="#545454">20</text><text x="130.85" y="115.10" text-anchor="middle" fill="#545454">40</text><text x="171.58" y="115.10" text-anchor="middle" fill="#545454">60</text><text x="212.30" y="115.10" text-anchor="middle" fill="#545454">80</text><text x="253.03" y="115.10" text-anchor="middle" fill="#545454">100</text><text x="293.76" y="115.10" text-anchor="middle" fill="#545454">120</text><text x="45.50" y="105.00" text-anchor="end" fill="#545454">0</text><text x="45.50" y="83.40" text-anchor="end" fill="#545454">25</text><text x="45.50" y="62.00" text-anchor="end" fill="#545454">50</text><text x="45.50" y="41.00" text-anchor="end" fill="#545454">75</text><text x="45.50" y="19.00" text-anchor="end" fill="#545454">100</text><rect x="219.60" y="20.00" width="87.6" height="16.2" fill="#fff" fill-opacity="0.85"/><rect x="222.40" y="22.60" width="14" height="10.8" fill="#fffff4" stroke="#ccc" stroke-width="0.8"/><rect x="224.00" y="24.20" width="11" height="7.7" fill="#0000ff"/><text x="240.30" y="31.70" fill="#929292" textLength="64.4">aida10 Rate</text><path d="M310 5L320 15L310 25L300 15z" fill="#ff0000"/></svg></div>
<div class="abs cell" style="left:484px;top:666px;width:476px;height:122px"><svg class="abs" style="left:61px;top:1px" width="340" height="118" viewBox="0 0 340 118" font-family='DejaVu Serif, Liberation Serif, serif' font-size="10.67"><path d="M90.13 14.10V101.20M130.85 14.10V101.20M171.58 14.10V101.20M212.30 14.10V101.20M253.03 14.10V101.20M293.76 14.10V101.20M49.00 79.40H312.90M49.00 57.80H312.90M49.00 36.20H312.90" stroke="#e6e6e6" stroke-width="1" fill="none"/><clipPath id="c21"><rect x="49.00" y="14.10" width="263.90" height="88.10"/></clipPath><rect x="49.00" y="14.10" width="263.90" height="87.10" fill="none" stroke="#7f7f7f" stroke-width="1.7"/><path d="M49.40 100.60L51.44 100.60L51.44 58.36L84.02 58.36L84.02 100.60L116.60 100.60L116.60 58.36L149.18 58.36L149.18 100.60L181.76 100.60L181.76 58.36L214.34 58.36L214.34 100.60L246.92 100.60L246.92 58.36L279.50 58.36L279.50 100.60L310.05 100.60" clip-path="url(#c21)" stroke="#0000ff" stroke-width="1" fill="none" stroke-opacity="0.82"/><text x="49.60" y="115.10" text-anchor="middle" fill="#545454">0</text><text x="90.33" y="115.10" text-anchor="middle" fill="#545454">20</text><text x="131.05" y="115.10" text-anchor="middle" fill="#545454">40</text><text x="171.78" y="115.10" text-anchor="middle" fill="#545454">60</text><text x="212.50" y="115.10" text-anchor="middle" fill="#545454">80</text><text x="253.23" y="115.10" text-anchor="middle" fill="#545454">100</text><text x="293.96" y="115.10" text-anchor="middle" fill="#545454">120</text><text x="46.30" y="105.00" text-anchor="end" fill="#545454">0</text><text x="46.30" y="83.40" text-anchor="end" fill="#545454">25</text><text x="46.30" y="62.00" text-anchor="end" fill="#545454">50</text><text x="46.30" y="41.00" text-anchor="end" fill="#545454">75</text><text x="46.30" y="19.00" text-anchor="end" fill="#545454">100</text><rect x="219.60" y="20.00" width="87.6" height="16.2" fill="#fff" fill-opacity="0.85"/><rect x="222.40" y="22.60" width="14" height="10.8" fill="#fffff4" stroke="#ccc" stroke-width="0.8"/><rect x="224.00" y="24.20" width="11" height="7.7" fill="#0000ff"/><text x="240.80" y="31.70" fill="#929292" textLength="64.4">aida14 Rate</text><path d="M310 5L320 15L310 25L300 15z" fill="#ff0000"/></svg></div>
<div class="abs cell" style="left:960px;top:666px;width:476px;height:122px"><svg class="abs" style="left:61px;top:1px" width="340" height="118" viewBox="0 0 340 118" font-family='DejaVu Serif, Liberation Serif, serif' font-size="10.67"><path d="M90.13 14.10V101.20M130.85 14.10V101.20M171.58 14.10V101.20M212.30 14.10V101.20M253.03 14.10V101.20M293.76 14.10V101.20M49.00 79.40H312.90M49.00 57.80H312.90M49.00 36.20H312.90" stroke="#e6e6e6" stroke-width="1" fill="none"/><clipPath id="c22"><rect x="49.00" y="14.10" width="263.90" height="88.10"/></clipPath><rect x="49.00" y="14.10" width="263.90" height="87.10" fill="none" stroke="#7f7f7f" stroke-width="1.7"/><path d="M49.40 100.60L51.44 100.60L51.44 59.22L84.02 59.22L84.02 100.60L116.60 100.60L116.60 59.22L149.18 59.22L149.18 100.60L181.76 100.60L181.76 59.22L214.34 59.22L214.34 100.60L246.92 100.60L246.92 59.22L279.50 59.22L279.50 100.60L310.05 100.60" clip-path="url(#c22)" stroke="#0000ff" stroke-width="1" fill="none" stroke-opacity="0.82"/><text x="50.10" y="115.10" text-anchor="middle" fill="#545454">0</text><text x="90.83" y="115.10" text-anchor="middle" fill="#545454">20</text><text x="131.55" y="115.10" text-anchor="middle" fill="#545454">40</text><text x="172.28" y="115.10" text-anchor="middle" fill="#545454">60</text><text x="213.00" y="115.10" text-anchor="middle" fill="#545454">80</text><text x="253.73" y="115.10" text-anchor="middle" fill="#545454">100</text><text x="294.46" y="115.10" text-anchor="middle" fill="#545454">120</text><text x="46.80" y="105.00" text-anchor="end" fill="#545454">0</text><text x="46.80" y="83.40" text-anchor="end" fill="#545454">25</text><text x="46.80" y="62.00" text-anchor="end" fill="#545454">50</text><text x="46.80" y="41.00" text-anchor="end" fill="#545454">75</text><text x="46.80" y="19.00" text-anchor="end" fill="#545454">100</text><rect x="220.60" y="20.00" width="87.6" height="16.2" fill="#fff" fill-opacity="0.85"/><rect x="223.40" y="22.60" width="14" height="10.8" fill="#fffff4" stroke="#ccc" stroke-width="0.8"/><rect x="225.00" y="24.20" width="11" height="7.7" fill="#0000ff"/><text x="241.20" y="31.70" fill="#929292" textLength="64.4">aida13 Rate</text><path d="M310 5L320 15L310 25L300 15z" fill="#ff0000"/></svg></div>
<div class="abs cell" style="left:1436px;top:666px;width:477px;height:122px"><svg class="abs" style="left:61px;top:1px" width="340" height="118" viewBox="0 0 340 118" font-family='DejaVu Serif, Liberation Serif, serif' font-size="10.67"><path d="M90.13 14.10V101.20M130.85 14.10V101.20M171.58 14.10V101.20M212.30 14.10V101.20M253.03 14.10V101.20M293.76 14.10V101.20M49.00 79.40H312.90M49.00 57.80H312.90M49.00 36.20H312.90" stroke="#e6e6e6" stroke-width="1" fill="none"/><clipPath id="c23"><rect x="49.00" y="14.10" width="263.90" height="88.10"/></clipPath><rect x="49.00" y="14.10" width="263.90" height="87.10" fill="none" stroke="#7f7f7f" stroke-width="1.7"/><path d="M49.40 100.60L310.05 100.60" clip-path="url(#c23)" stroke="#0000ff" stroke-width="1" fill="none" stroke-opacity="0.82"/><text x="50.30" y="115.10" text-anchor="middle" fill="#545454">0</text><text x="91.03" y="115.10" text-anchor="middle" fill="#545454">20</text><text x="131.75" y="115.10" text-anchor="middle" fill="#545454">40</text><text x="172.48" y="115.10" text-anchor="middle" fill="#545454">60</text><text x="213.20" y="115.10" text-anchor="middle" fill="#545454">80</text><text x="253.93" y="115.10" text-anchor="middle" fill="#545454">100</text><text x="294.66" y="115.10" text-anchor="middle" fill="#545454">120</text><text x="46.80" y="105.00" text-anchor="end" fill="#545454">0</text><text x="46.80" y="83.40" text-anchor="end" fill="#545454">25</text><text x="46.80" y="62.00" text-anchor="end" fill="#545454">50</text><text x="46.80" y="41.00" text-anchor="end" fill="#545454">75</text><text x="46.80" y="19.00" text-anchor="end" fill="#545454">100</text><rect x="220.60" y="20.00" width="87.6" height="16.2" fill="#fff" fill-opacity="0.85"/><rect x="223.40" y="22.60" width="14" height="10.8" fill="#fffff4" stroke="#ccc" stroke-width="0.8"/><rect x="225.00" y="24.20" width="11" height="7.7" fill="#0000ff"/><text x="241.50" y="31.70" fill="#929292" textLength="64.4">aida06 Rate</text><path d="M310 5L320 15L310 25L300 15z" fill="#ff0000"/></svg></div>
<div class="abs cell" style="left:7px;top:788px;width:477px;height:122px"><svg class="abs" style="left:62px;top:1px" width="340" height="118" viewBox="0 0 340 118" font-family='DejaVu Serif, Liberation Serif, serif' font-size="10.67"><path d="M90.13 14.10V101.20M130.85 14.10V101.20M171.58 14.10V101.20M212.30 14.10V101.20M253.03 14.10V101.20M293.76 14.10V101.20M49.00 79.40H312.90M49.00 57.80H312.90M49.00 36.20H312.90" stroke="#e6e6e6" stroke-width="1" fill="none"/><clipPath id="c30"><rect x="49.00" y="14.10" width="263.90" height="88.10"/></clipPath><rect x="49.00" y="14.10" width="263.90" height="87.10" fill="none" stroke="#7f7f7f" stroke-width="1.7"/><path d="M49.40 100.60L51.44 100.60L51.44 58.36L84.02 58.36L84.02 100.60L116.60 100.60L116.60 58.36L149.18 58.36L149.18 100.60L181.76 100.60L181.76 58.36L214.34 58.36L214.34 100.60L246.92 100.60L246.92 58.36L279.50 58.36L279.50 100.60L310.05 100.60" clip-path="url(#c30)" stroke="#0000ff" stroke-width="1" fill="none" stroke-opacity="0.82"/><text x="49.40" y="115.10" text-anchor="middle" fill="#545454">0</text><text x="90.13" y="115.10" text-anchor="middle" fill="#545454">20</text><text x="130.85" y="115.10" text-anchor="middle" fill="#545454">40</text><text x="171.58" y="115.10" text-anchor="middle" fill="#545454">60</text><text x="212.30" y="115.10" text-anchor="middle" fill="#545454">80</text><text x="253.03" y="115.10" text-anchor="middle" fill="#545454">100</text><text x="293.76" y="115.10" text-anchor="middle" fill="#545454">120</text><text x="45.50" y="105.00" text-anchor="end" fill="#545454">0</text><text x="45.50" y="83.40" text-anchor="end" fill="#545454">25</text><text x="45.50" y="62.00" text-anchor="end" fill="#545454">50</text><text x="45.50" y="41.00" text-anchor="end" fill="#545454">75</text><text x="45.50" y="19.00" text-anchor="end" fill="#545454">100</text><rect x="219.60" y="20.00" width="87.6" height="16.2" fill="#fff" fill-opacity="0.85"/><rect x="222.40" y="22.60" width="14" height="10.8" fill="#fffff4" stroke="#ccc" stroke-width="0.8"/><rect x="224.00" y="24.20" width="11" height="7.7" fill="#0000ff"/><text x="240.30" y="31.70" fill="#929292" textLength="64.4">aida11 Rate</text><path d="M310 5L320 15L310 25L300 15z" fill="#ff0000"/></svg></div>
<div class="abs cell" style="left:484px;top:788px;width:476px;height:122px"><svg class="abs" style="left:61px;top:1px" width="340" height="118" viewBox="0 0 340 118" font-family='DejaVu Serif, Liberation Serif, serif' font-size="10.67"><path d="M90.13 14.10V101.20M130.85 14.10V101.20M171.58 14.10V101.20M212.30 14.10V101.20M253.03 14.10V101.20M293.76 14.10V101.20M49.00 79.40H312.90M49.00 57.80H312.90M49.00 36.20H312.90" stroke="#e6e6e6" stroke-width="1" fill="none"/><clipPath id="c31"><rect x="49.00" y="14.10" width="263.90" height="88.10"/></clipPath><rect x="49.00" y="14.10" width="263.90" height="87.10" fill="none" stroke="#7f7f7f" stroke-width="1.7"/><rect x="250.99" y="56.64" width="2.04" height="43.96" fill="#0000ff" fill-opacity="0.3"/><path d="M49.40 100.60L51.44 100.60L51.44 56.64L84.02 56.64L84.02 100.60L116.60 100.60L116.60 56.64L149.18 56.64L149.18 100.60L181.76 100.60L181.76 56.64L214.34 56.64L214.34 100.60L246.92 100.60L246.92 56.64L250.99 56.64L250.99 100.60L253.03 100.60L253.03 56.64L279.50 56.64L279.50 100.60L310.05 100.60" clip-path="url(#c31)" stroke="#0000ff" stroke-width="1" fill="none" stroke-opacity="0.82"/><text x="49.60" y="115.10" text-anchor="middle" fill="#545454">0</text><text x="90.33" y="115.10" text-anchor="middle" fill="#545454">20</text><text x="131.05" y="115.10" text-anchor="middle" fill="#545454">40</text><text x="171.78" y="115.10" text-anchor="middle" fill="#545454">60</text><text x="212.50" y="115.10" text-anchor="middle" fill="#545454">80</text><text x="253.23" y="115.10" text-anchor="middle" fill="#545454">100</text><text x="293.96" y="115.10" text-anchor="middle" fill="#545454">120</text><text x="46.30" y="105.00" text-anchor="end" fill="#545454">0</text><text x="46.30" y="83.40" text-anchor="end" fill="#545454">25</text><text x="46.30" y="62.00" text-anchor="end" fill="#545454">50</text><text x="46.30" y="41.00" text-anchor="end" fill="#545454">75</text><text x="46.30" y="19.00" text-anchor="end" fill="#545454">100</text><rect x="219.60" y="20.00" width="87.6" height="16.2" fill="#fff" fill-opacity="0.85"/><rect x="222.40" y="22.60" width="14" height="10.8" fill="#fffff4" stroke="#ccc" stroke-width="0.8"/><rect x="224.00" y="24.20" width="11" height="7.7" fill="#0000ff"/><text x="240.80" y="31.70" fill="#929292" textLength="64.4">aida07 Rate</text><path d="M310 5L320 15L310 25L300 15z" fill="#ff0000"/></svg></div>
<div class="abs cell" style="left:960px;top:788px;width:476px;height:122px"><svg class="abs" style="left:61px;top:1px" width="340" height="118" viewBox="0 0 340 118" font-family='DejaVu Serif, Liberation Serif, serif' font-size="10.67"><path d="M90.13 14.10V101.20M130.85 14.10V101.20M171.58 14.10V101.20M212.30 14.10V101.20M253.03 14.10V101.20M293.76 14.10V101.20M49.00 79.40H312.90M49.00 57.80H312.90M49.00 36.20H312.90" stroke="#e6e6e6" stroke-width="1" fill="none"/><clipPath id="c32"><rect x="49.00" y="14.10" width="263.90" height="88.10"/></clipPath><rect x="49.00" y="14.10" width="263.90" height="87.10" fill="none" stroke="#7f7f7f" stroke-width="1.7"/><rect x="132.89" y="14.10" width="2.95" height="87.10" fill="#0000ff" fill-opacity="0.38"/><path d="M49.40 100.60L51.44 100.60L51.44 58.36L63.65 58.36L63.65 59.22L84.02 59.22L84.02 100.60L124.74 100.60L124.74 -20.08L128.82 -20.08L128.82 100.60L132.89 100.60L132.89 -20.08L135.84 -20.08L135.84 100.60L181.76 100.60L181.76 58.36L193.98 58.36L193.98 59.22L214.34 59.22L214.34 100.60L246.92 100.60L246.92 58.36L259.14 58.36L259.14 59.22L271.36 59.22L271.36 58.36L273.39 58.36L273.39 59.22L279.50 59.22L279.50 100.60L310.05 100.60" clip-path="url(#c32)" stroke="#0000ff" stroke-width="1" fill="none" stroke-opacity="0.82"/><text x="50.10" y="115.10" text-anchor="middle" fill="#545454">0</text><text x="90.83" y="115.10" text-anchor="middle" fill="#545454">20</text><text x="131.55" y="115.10" text-anchor="middle" fill="#545454">40</text><text x="172.28" y="115.10" text-anchor="middle" fill="#545454">60</text><text x="213.00" y="115.10" text-anchor="middle" fill="#545454">80</text><text x="253.73" y="115.10" text-anchor="middle" fill="#545454">100</text><text x="294.46" y="115.10" text-anchor="middle" fill="#545454">120</text><text x="46.80" y="105.00" text-anchor="end" fill="#545454">0</text><text x="46.80" y="83.40" text-anchor="end" fill="#545454">25</text><text x="46.80" y="62.00" text-anchor="end" fill="#545454">50</text><text x="46.80" y="41.00" text-anchor="end" fill="#545454">75</text><text x="46.80" y="19.00" text-anchor="end" fill="#545454">100</text><rect x="220.60" y="20.00" width="87.6" height="16.2" fill="#fff" fill-opacity="0.85"/><rect x="223.40" y="22.60" width="14" height="10.8" fill="#fffff4" stroke="#ccc" stroke-width="0.8"/><rect x="225.00" y="24.20" width="11" height="7.7" fill="#0000ff"/><text x="241.20" y="31.70" fill="#929292" textLength="64.4">aida16 Rate</text><path d="M310 5L320 15L310 25L300 15z" fill="#ff0000"/></svg></div>
<div class="abs cell" style="left:1436px;top:788px;width:477px;height:122px"><svg class="abs" style="left:61px;top:1px" width="340" height="118" viewBox="0 0 340 118" font-family='DejaVu Serif, Liberation Serif, serif' font-size="10.67"><path d="M90.13 14.10V101.20M130.85 14.10V101.20M171.58 14.10V101.20M212.30 14.10V101.20M253.03 14.10V101.20M293.76 14.10V101.20M49.00 79.40H312.90M49.00 57.80H312.90M49.00 36.20H312.90" stroke="#c8c8c8" stroke-width="1" fill="none"/><clipPath id="c33"><rect x="49.00" y="14.10" width="263.90" height="88.10"/></clipPath><rect x="49.00" y="14.10" width="263.90" height="87.10" fill="none" stroke="#000" stroke-width="1.7"/><path d="M49.40 100.60L310.05 100.60" clip-path="url(#c33)" stroke="#0000ff" stroke-width="1" fill="none" stroke-opacity="0.82"/><text x="50.30" y="115.10" text-anchor="middle" fill="#545454">0</text><text x="91.03" y="115.10" text-anchor="middle" fill="#545454">20</text><text x="131.75" y="115.10" text-anchor="middle" fill="#545454">40</text><text x="172.48" y="115.10" text-anchor="middle" fill="#545454">60</text><text x="213.20" y="115.10" text-anchor="middle" fill="#545454">80</text><text x="253.93" y="115.10" text-anchor="middle" fill="#545454">100</text><text x="294.66" y="115.10" text-anchor="middle" fill="#545454">120</text><text x="46.80" y="105.00" text-anchor="end" fill="#545454">0</text><text x="46.80" y="83.40" text-anchor="end" fill="#545454">25</text><text x="46.80" y="62.00" text-anchor="end" fill="#545454">50</text><text x="46.80" y="41.00" text-anchor="end" fill="#545454">75</text><text x="46.80" y="19.00" text-anchor="end" fill="#545454">100</text><rect x="220.60" y="20.00" width="87.6" height="16.2" fill="#fff" fill-opacity="0.85"/><rect x="223.40" y="22.60" width="14" height="10.8" fill="#fffff4" stroke="#ccc" stroke-width="0.8"/><rect x="225.00" y="24.20" width="11" height="7.7" fill="#0000ff"/><text x="241.50" y="31.70" fill="#111" textLength="64.4">aida08 Rate</text><path d="M310 5L320 15L310 25L300 15z" fill="#00ff00"/></svg></div>
<div class="btn" style="left:6px;top:924px;width:100px;height:19px;line-height:17px;">Empty Log Window</div>
<div class="btn" style="left:110px;top:924px;width:132px;height:19px;line-height:17px;">Send Log Window to ELog</div>
<div class="btn" style="left:246px;top:924px;width:40px;height:19px;line-height:17px;">Reload</div>
<div class="btn" style="left:290px;top:924px;width:35px;height:19px;line-height:17px;">Reset</div>
<div class="btn" style="left:329px;top:924px;width:80px;height:19px;line-height:17px;">Show Variables</div>
<div class="btn" style="left:413px;top:924px;width:96px;height:19px;line-height:17px;">Show Log Window</div>
<div class="btn" style="left:513px;top:924px;width:79px;height:19px;line-height:17px;">Enable Logging</div>
<div class="btn" style="left:1806px;top:924px;width:108px;height:19px;line-height:17px;">How to use this page</div>
<div class="lbl" style="left:1663px;top:956px">Last Updated: April 18, 2026 15:41:50</div>
<div class="hr" style="top:984px"></div>
<div class="lbl" style="left:6.6px;top:984px;font-size:15px;line-height:15px;color:#222">.</div>
<div class="lbl" style="left:8px;top:998px;color:#0000ee;text-decoration:underline">Home</div>
</div></body></html>
